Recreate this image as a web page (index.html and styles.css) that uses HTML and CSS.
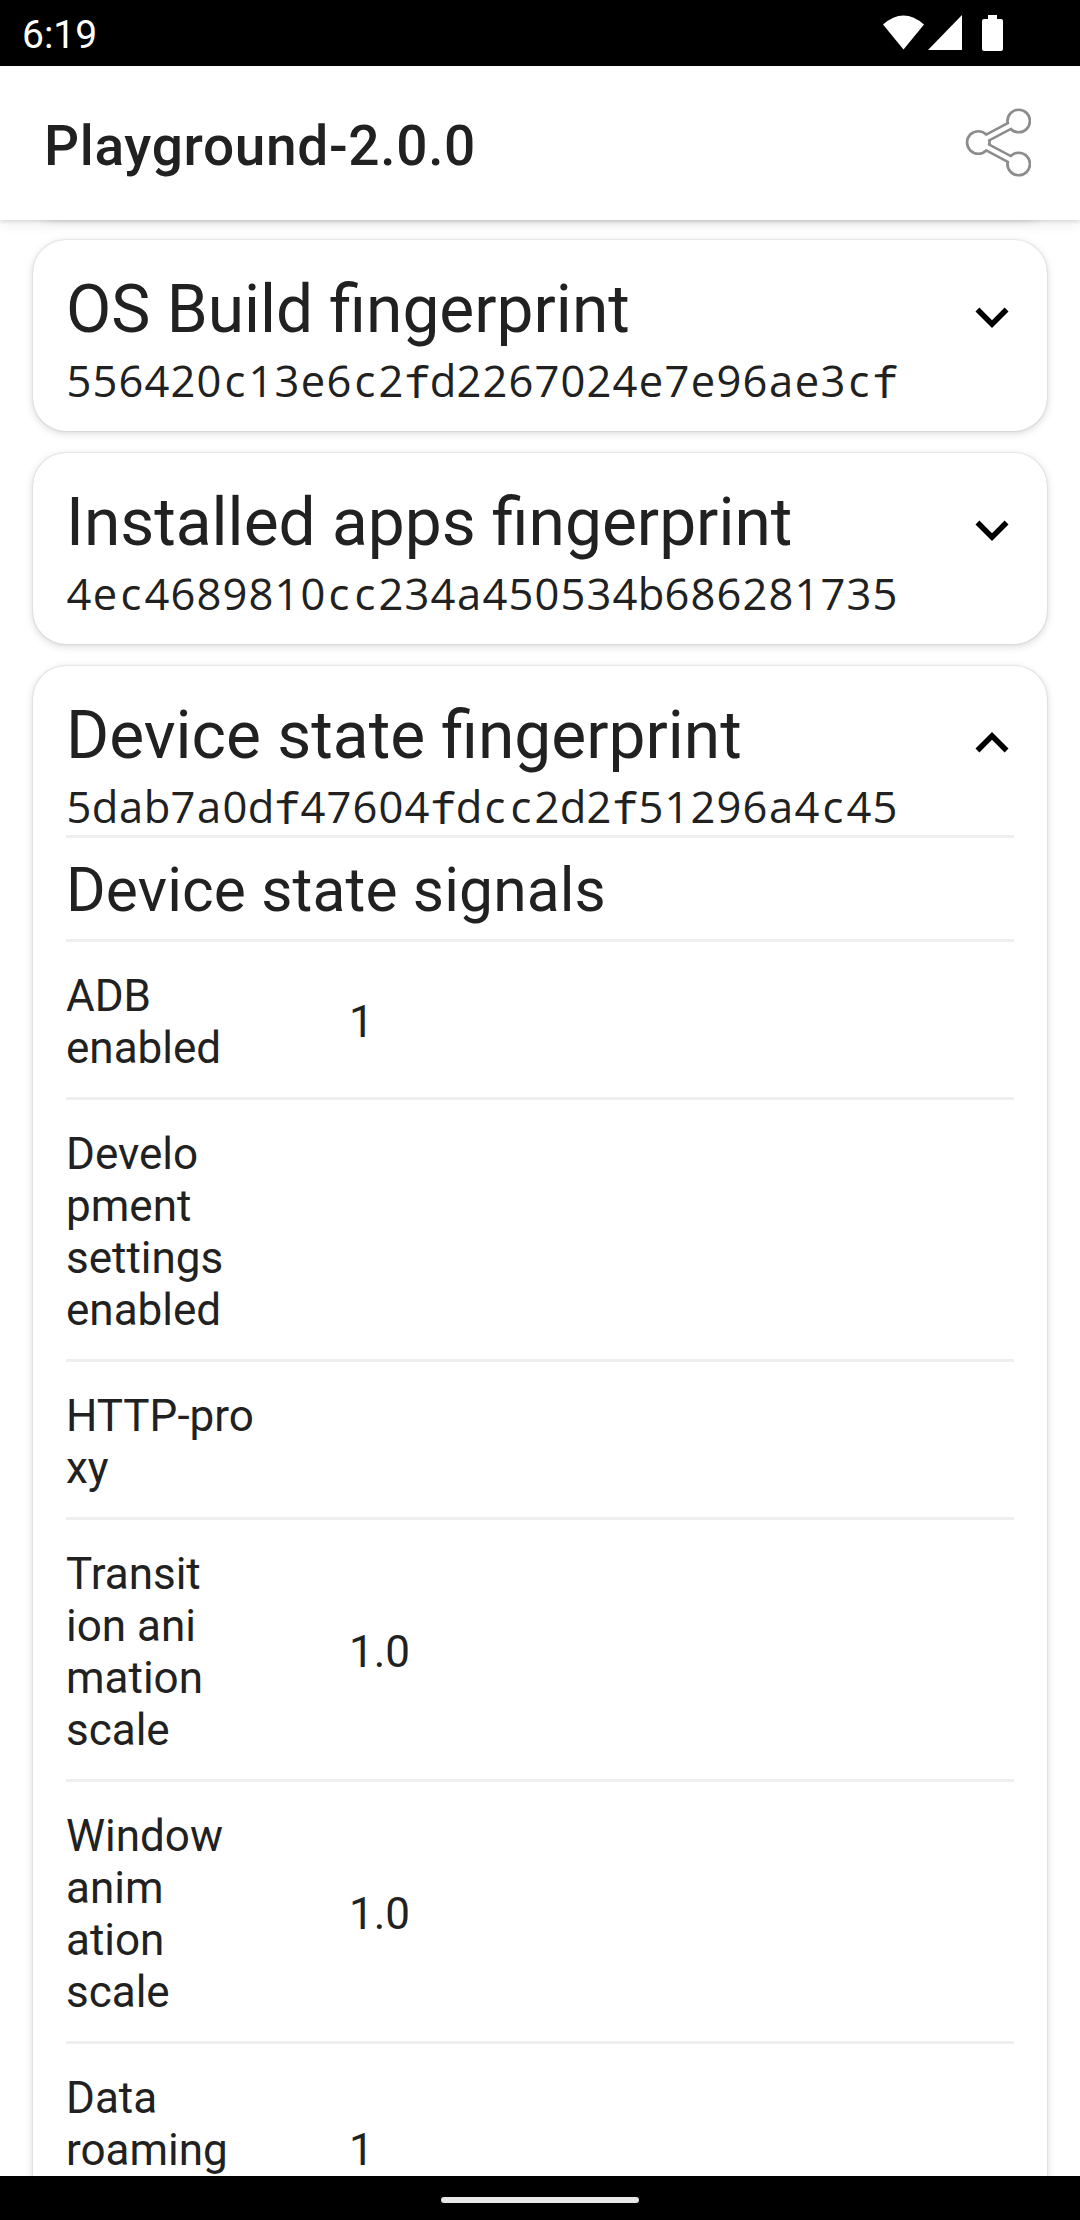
FILE: index.html
```html
<!DOCTYPE html>
<html lang="en">
<head>
<meta charset="utf-8">
<title>Playground-2.0.0</title>
<link rel="stylesheet" href="styles.css">
</head>
<body>
<div class="screen">
  <header class="status">
    <span class="time">6:19</span>
    <svg class="status-icons" width="122" height="40" viewBox="882 13 122 40" fill="#fff">
      <path d="M883 24.5Q903.500 6.500 924 24.500L903.500 49.500Z"/>
      <path d="M928 50H962V15Z"/>
      <path d="M988 15h9v4h4a2 2 0 0 1 2 2v28a2 2 0 0 1-2 2h-17a2 2 0 0 1-2-2V21a2 2 0 0 1 2-2h4z"/>
    </svg>
  </header>
  <div class="appbar">
    <h1 class="app-title">Playground-2.0.0</h1>
    <svg class="share" width="66" height="70" viewBox="965 107 66 70">
      <g stroke="#8c8c8c" stroke-width="9" fill="#8c8c8c">
        <path fill="none" d="M1018.700 121L978.300 142.500L1018.700 164"/>
        <g stroke="none"><circle cx="978.300" cy="142.500" r="12.600"/><circle cx="1018.700" cy="121" r="12.600"/><circle cx="1018.700" cy="164" r="12.600"/></g>
      </g>
      <g stroke="#fff" stroke-width="4" fill="#fff">
        <path fill="none" d="M1018.700 121L978.300 142.500L1018.700 164"/>
        <g stroke="none"><circle cx="978.300" cy="142.500" r="9.900"/><circle cx="1018.700" cy="121" r="9.900"/><circle cx="1018.700" cy="164" r="9.900"/></g>
      </g>
    </svg>
  </div>
  <main class="list">
    <section class="card card-passed"></section>
    <section class="card">
      <div class="head">
        <div><h2 class="title">OS Build fingerprint</h2>
        <p class="hash">556420c13e6c2fd2267024e7e96ae3cf</p></div>
        <svg class="chevron" viewBox="0 0 24 24"><path d="M7.410 8.590L12 13.170l4.590-4.580L18 10l-6 6-6-6z"/></svg>
      </div>
    </section>
    <section class="card">
      <div class="head">
        <div><h2 class="title">Installed apps fingerprint</h2>
        <p class="hash">4ec4689810cc234a450534b686281735</p></div>
        <svg class="chevron" viewBox="0 0 24 24"><path d="M7.410 8.590L12 13.170l4.590-4.580L18 10l-6 6-6-6z"/></svg>
      </div>
    </section>
    <section class="card card-open">
      <div class="head">
        <div><h2 class="title">Device state fingerprint</h2>
        <p class="hash">5dab7a0df47604fdcc2d2f51296a4c45</p></div>
        <svg class="chevron" viewBox="0 0 24 24"><path d="M7.410 15.410L12 10.830l4.590 4.580L18 14l-6-6-6 6z"/></svg>
      </div>
      <div class="details">
        <h3 class="subtitle">Device state signals</h3>
        <div class="row"><div class="label">ADB<br>enabled</div><div class="value">1</div></div>
        <div class="row"><div class="label">Develo<br>pment<br>settings<br>enabled</div><div class="value"></div></div>
        <div class="row"><div class="label">HTTP-pro<br>xy</div><div class="value"></div></div>
        <div class="row"><div class="label">Transit<br>ion ani<br>mation<br>scale</div><div class="value">1.0</div></div>
        <div class="row"><div class="label">Window<br>anim<br>ation<br>scale</div><div class="value">1.0</div></div>
        <div class="row row-last"><div class="label">Data<br>roaming</div><div class="value">1</div></div>
      </div>
    </section>
  </main>
  <footer class="nav"><div class="handle"></div></footer>
</div>
<script src="hash.js"></script>
</body>
</html>
```
FILE: hash.js
```js
// Set every hash in fixed-width cells, one per character.
document.querySelectorAll('.hash').forEach(function (hash) {
  var chars = hash.textContent.split('');
  hash.textContent = '';
  chars.forEach(function (c) {
    var cell = document.createElement('span');
    cell.className = c === 'f' ? 'cell cell-mono' : 'cell';
    cell.textContent = c;
    hash.appendChild(cell);
  });
});
```
FILE: styles.css
```css
* { box-sizing: border-box; margin: 0; padding: 0; }
body {
  background: #fff;
  color: #212121;
  font-family: Roboto, "Noto Sans", sans-serif;
}
.screen {
  width: 1080px;
  height: 2220px;
  display: flex;
  flex-direction: column;
  overflow: hidden;
}
.status {
  flex: none;
  height: 66px;
  background: #000;
  color: #fff;
  display: flex;
  justify-content: space-between;
  padding: 13px 76px 0 22px;
  position: relative;
  z-index: 2;
}
.time { font-size: 39px; line-height: 44px; }
.appbar {
  flex: none;
  height: 154px;
  background: #fff;
  display: flex;
  justify-content: space-between;
  padding: 41px 49px 0 44px;
  box-shadow: 0 1px 4px rgba(0,0,0,.14), 0 5px 12px rgba(0,0,0,.07);
  position: relative;
  z-index: 1;
}
.app-title { font-size: 55px; line-height: 78px; font-weight: 500; letter-spacing: .67px; }
.list {
  flex: 1;
  min-height: 0;
  margin-top: -24px;
  padding: 0 33px;
  display: flex;
  flex-direction: column;
  gap: 22px;
  overflow: hidden;
}
.card {
  flex: none;
  height: 191px;
  border-radius: 33px;
  padding: 0 33px;
  background: #fff;
  box-shadow: 0 0 2px rgba(0,0,0,.2), 0 2px 8px rgba(0,0,0,.16);
}
.card-passed { height: 22px; border-radius: 0 0 33px 33px; }
.card-open { height: 1700px; }
.head {
  height: 169px;
  display: flex;
  justify-content: space-between;
  padding-top: 31px;
}
.title { font-size: 65.85px; line-height: 78px; font-weight: 400; }
.hash {
  display: flex;
  margin-top: 6px;
  font-family: "Open Sans", "Noto Sans", sans-serif;
  font-size: 43.5px;
  line-height: 52px;
}
.cell { width: 26px; display: flex; justify-content: center; }
.cell-mono { font-family: "Noto Sans Mono", "Open Sans", monospace; }
.chevron { width: 66px; height: 66px; margin: 13px -11px 0 0; }
.subtitle {
  height: 104px;
  border-top: 3px solid #efefef;
  font-size: 60.5px;
  line-height: 105px;
  font-weight: 400;
  letter-spacing: .14px;
}
.row {
  border-top: 3px solid #efefef;
  padding: 28px 0 23px;
  display: flex;
  align-items: center;
  font-size: 44px;
  line-height: 52px;
}
.label { width: 283px; }
.row-last { height: 210px; }
.row-last .label { height: 156px; }
.nav {
  flex: none;
  height: 44px;
  background: #000;
  display: flex;
  justify-content: center;
  padding-top: 21px;
  position: relative;
}
.handle { width: 198px; height: 6px; border-radius: 3px; background: #e8e8e8; }
```
